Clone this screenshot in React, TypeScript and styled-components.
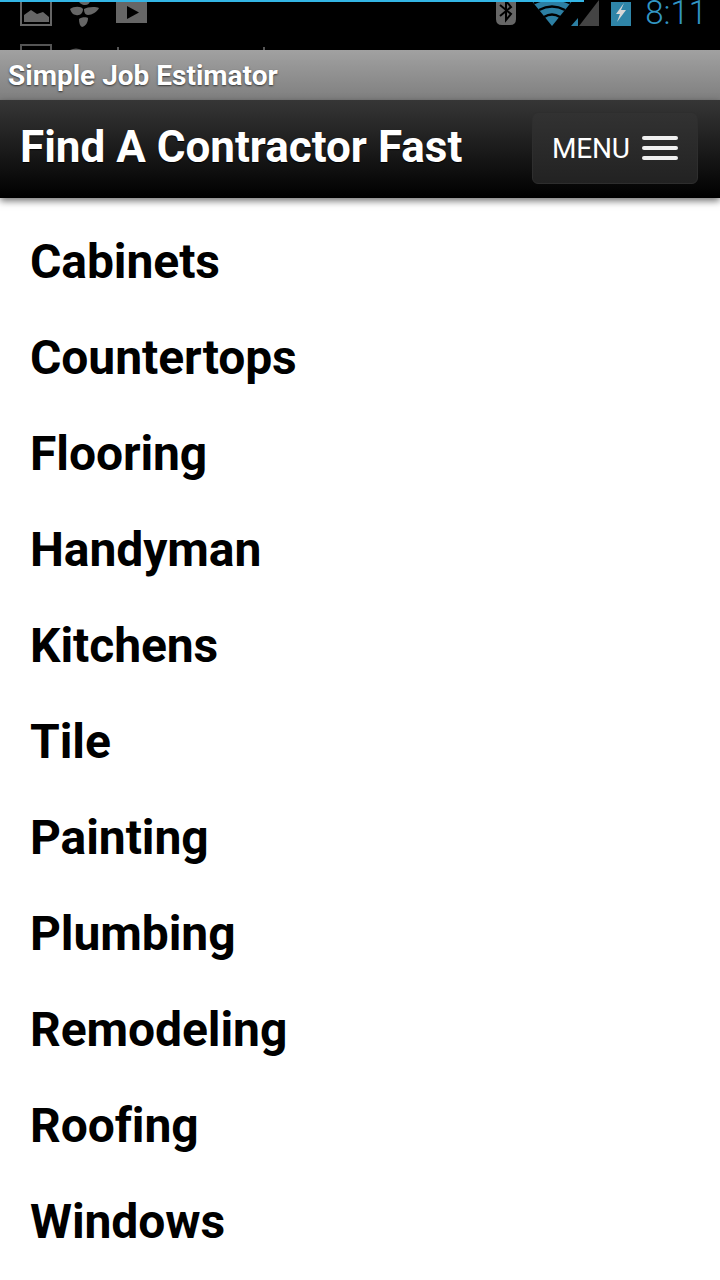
import React from "react";
import styled, { createGlobalStyle } from "styled-components";

const GlobalStyle = createGlobalStyle`
  html, body {
    margin: 0;
    padding: 0;
    background: #fff;
    font-family: Roboto, "Liberation Sans", sans-serif;
    font-variant-ligatures: none;
  }
`;

const Page = styled.div`
  width: 720px;
  height: 1280px;
  overflow: hidden;
  background: #fff;
`;

const StatusBar = styled.div`
  height: 50px;
  box-sizing: border-box;
  background: #000;
  display: flex;
  justify-content: space-between;
  overflow: hidden;
  position: relative;
`;

const LoadLine = styled.div`
  position: absolute;
  top: 0;
  left: 0;
  width: 584px;
  height: 2px;
  background: #33b5e5;
`;

const NotifyColumn = styled.div`
  display: flex;
  flex-direction: column;
  gap: 18px;
  padding-left: 20px;
`;

const NotifyRow = styled.div`
  display: flex;
  align-items: flex-start;
  height: 26px;
  svg:nth-child(2) {
    margin: 0 16px 0 18px;
  }
`;

const SystemRow = styled.div`
  display: flex;
  align-items: flex-start;
  height: 27px;
  padding-right: 13px;
  svg:nth-child(1) {
    margin-right: 16px;
  }
  svg:nth-child(2) {
    margin-right: 11px;
  }
`;

const Clock = styled.span`
  margin: 1px 0 0 14px;
  color: #3296c4;
  font-size: 33px;
  font-weight: 300;
  line-height: 24px;
`;

const TitleBar = styled.div`
  height: 50px;
  box-sizing: border-box;
  padding: 0 8px;
  display: flex;
  align-items: center;
  background: linear-gradient(#a1a1a1, #7f7f7f);
  color: #fff;
  font-size: 28px;
  font-weight: 700;
  text-shadow: 0 1px 2px #333;
`;

const Header = styled.header`
  height: 98px;
  box-sizing: border-box;
  padding: 0 22px 2px 20px;
  display: flex;
  align-items: center;
  justify-content: space-between;
  background: linear-gradient(#363636, #000);
  box-shadow: 0 3px 7px rgba(0, 0, 0, 0.55);
  position: relative;
`;

const Heading = styled.h1`
  margin: 0 0 2px;
  color: #fff;
  font-size: 44px;
  font-weight: 700;
  line-height: 50px;
  text-shadow: 0 1px 1px #000;
`;

const MenuButton = styled.button`
  width: 166px;
  height: 72px;
  box-sizing: border-box;
  padding: 0 19px;
  display: flex;
  align-items: center;
  justify-content: space-between;
  border: 1px solid #2e2e2e;
  border-radius: 6px;
  background: linear-gradient(#323232, #222);
  color: #fff;
  font-family: inherit;
  font-size: 28px;
  font-weight: 400;
  letter-spacing: -0.2px;
`;

const Bars = styled.span`
  display: flex;
  flex-direction: column;
  gap: 6px;
`;

const Bar = styled.i`
  display: block;
  width: 36px;
  height: 4px;
  border-radius: 2px;
  background: #f0f0f0;
`;

const TradeList = styled.ul`
  list-style: none;
  margin: 0;
  padding: 15px 0 0 30px;
`;

const TradeItem = styled.li`
  height: 96px;
  display: flex;
  align-items: center;
  color: #000;
  font-size: 48px;
  font-weight: 700;
  letter-spacing: -0.08px;
`;

const trades = [
  "Cabinets",
  "Countertops",
  "Flooring",
  "Handyman",
  "Kitchens",
  "Tile",
  "Painting",
  "Plumbing",
  "Remodeling",
  "Roofing",
  "Windows",
];

function PictureIcon() {
  return (
    <svg width="32" height="26" viewBox="0 0 32 26">
      <path d="M1 -4V25H31V-4" fill="none" stroke="#666" strokeWidth="2" />
      <path d="M4 22V15L11 10L17 14L23 12L29 17V22Z" fill="#666" />
    </svg>
  );
}

function LeafIcon() {
  return (
    <svg width="30" height="27" viewBox="0 0 30 27">
      <path d="M0 9C4 6 11 6 13 9C13 13 10 16 6 15C3 15 1 12 0 9Z" fill="#666" />
      <path d="M14 9C17 7 25 6 29 8C27 12 22 15 18 15C15 15 14 12 14 9Z" fill="#666" />
      <path d="M9 1H20C20 3 18 5 15 5C12 5 9 3 9 1Z" fill="#666" />
      <path d="M9 19C11 17 17 17 18 18C18 22 16 26 12 27C10 26 9 23 9 19Z" fill="#666" />
    </svg>
  );
}

function PlayIcon() {
  return (
    <svg width="31" height="23" viewBox="0 0 31 23">
      <rect width="31" height="23" fill="#666" />
      <path d="M11 6L23 12.5L11 19Z" fill="#000" />
    </svg>
  );
}

function GhostNotification() {
  return (
    <svg width="280" height="6" viewBox="0 0 280 6">
      <path d="M1 6V1H31V6" fill="none" stroke="#555" strokeWidth="2" />
      <path d="M50 6Q56 3 62 6Z" fill="#555" />
      <rect x="97" y="3" width="2" height="3" fill="#555" />
      <rect x="243" y="3" width="2" height="3" fill="#555" />
    </svg>
  );
}

function BluetoothIcon() {
  return (
    <svg width="20" height="25" viewBox="0 0 20 25">
      <path d="M0 -4H20V19Q20 25 14 25H6Q0 25 0 19Z" fill="#666" />
      <path d="M4 5L15 14L10 20V1L15 7L4 16" fill="none" stroke="#000" strokeWidth="2" />
    </svg>
  );
}

function WifiIcon() {
  return (
    <svg width="68" height="26" viewBox="0 0 68 26">
      <path d="M-1 0L20 26L41 0Z" fill="#2c7fa3" />
      <path d="M2 3Q20 -5 38 3M7 10Q20 3 33 10M12 17Q20 12 28 17" fill="none" stroke="#000" strokeWidth="2.5" />
      <path d="M47 26L67 0V26Z" fill="#444" />
      <path d="M39 26L46 26V18Z" fill="#2c7fa3" />
    </svg>
  );
}

function BatteryIcon() {
  return (
    <svg width="20" height="26" viewBox="0 0 20 26">
      <rect y="2" width="20" height="24" fill="#2f85a8" />
      <path d="M13 3L5 14H9L6 22L15 10H10Z" fill="#d8d8d8" />
    </svg>
  );
}

export default function App() {
  return (
    <Page>
      <GlobalStyle />
      <StatusBar>
        <LoadLine />
        <NotifyColumn>
          <NotifyRow>
            <PictureIcon />
            <LeafIcon />
            <PlayIcon />
          </NotifyRow>
          <GhostNotification />
        </NotifyColumn>
        <SystemRow>
          <BluetoothIcon />
          <WifiIcon />
          <BatteryIcon />
          <Clock>8:11</Clock>
        </SystemRow>
      </StatusBar>
      <TitleBar>Simple Job Estimator</TitleBar>
      <Header>
        <Heading>Find A Contractor Fast</Heading>
        <MenuButton>
          MENU
          <Bars>
            <Bar />
            <Bar />
            <Bar />
          </Bars>
        </MenuButton>
      </Header>
      <TradeList>
        {trades.map((trade) => (
          <TradeItem key={trade}>{trade}</TradeItem>
        ))}
      </TradeList>
    </Page>
  );
}
